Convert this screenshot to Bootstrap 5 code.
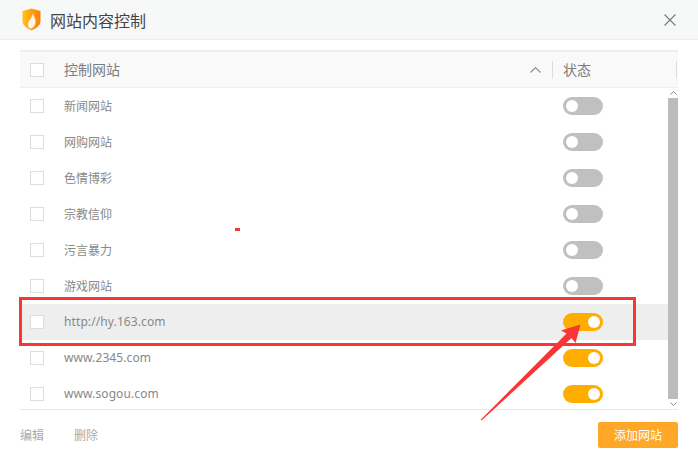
<!DOCTYPE html>
<html lang="zh">
<head>
<meta charset="utf-8">
<title>网站内容控制</title>
<link href="https://cdn.jsdelivr.net/npm/bootstrap@5.3.0/dist/css/bootstrap.min.css" rel="stylesheet">
<style>
html,body{width:698px;height:460px;overflow:hidden;background:#fff;}
body{font-family:"Noto Sans CJK SC","Noto Sans",sans-serif;color:#777;position:relative;}
.dlg-head{height:40px;background:#f7f9f9;border-bottom:1px solid #eee;padding:0 22px 0 22px;}
.dlg-title{font-size:16px;color:#444;margin-left:9px;line-height:20px;}
.dlg-body{margin:10px 20px 0;width:658px;}
.t-head{height:38px;background:#f9f9f9;border-top:2px solid #eee;border-bottom:1px solid #eee;font-size:14px;color:#7c7c7c;}
.t-rows{height:322px;border-bottom:1px solid #e8e8e8;overflow:hidden;}
.t-list{height:324px;overflow:hidden;flex:1 1 auto;min-width:0;}
.t-row{height:36px;font-size:12px;color:#888;flex:none;}
.t-row.is-hover{background:#eee;}
.latin{font-family:"Noto Sans","Noto Sans CJK SC",sans-serif;font-size:12px;letter-spacing:.1px;}
.box{width:14px;height:14px;border:1px solid #ddd;background:#fff;margin-left:10px;flex:none;}
.c-name{margin-left:20px;width:499px;flex:none;}
.c-sort{width:488px;margin-left:20px;flex:none;}
.sort-ico{margin-right:11px;}
.divider{width:1px;height:18px;background:#ddd;flex:none;}
.c-state{margin-left:10px;width:113px;flex:none;}
.tg{width:40px;height:18px;border-radius:9px;background:#c0c0c0;padding:3px;display:flex;flex:none;}
.tg i{width:12px;height:12px;border-radius:50%;background:#fff;display:block;}
.tg.on{background:#ffae00;justify-content:flex-end;}
.sbar{width:10px;flex:none;}
.sbar-arrow{height:10px;}
.sbar-thumb{flex:1;background:#bcbcbc;}
.dlg-foot{height:50px;margin:0 20px;width:658px;font-size:12px;color:#aaa;}
.dlg-foot span+span{margin-left:30px;}
.add-btn{width:80px;height:26px;padding:0;background:#ffa726;border:0;border-radius:2px;color:#fff;font-size:12px;}
.red-frame{position:absolute;left:19px;top:297px;width:617px;height:49px;border:3px solid #f83636;}
.red-dot{position:absolute;left:235px;top:228px;width:5px;height:3px;background:#f83636;}
.red-arrow{position:absolute;left:475px;top:320px;}
</style>
</head>
<body>
<div class="dlg-head d-flex align-items-center">
  <svg width="19" height="23" viewBox="0 0 19 23" aria-label="logo">
    <defs><linearGradient id="sg" x1="0" y1="0" x2="1" y2="0"><stop offset="0" stop-color="#ffc21a"/><stop offset="1" stop-color="#ff7d0a"/></linearGradient></defs>
    <path d="M.5 3 L9.500 .5 L18.500 3 V13 C18.500 18 13 21 9.500 22.500 C6 21 .5 18 .5 13Z" fill="url(#sg)"/>
    <path d="M11 5 C11.500 9 14 10.500 13.500 14.500 C13 18 10.500 20.500 8.500 20.500 C6 20 5.500 16.500 6.500 14 C7.500 11.500 8.500 12 9 10 C9.800 8.500 10.600 7 11 5Z" fill="#fff" opacity=".88"/>
  </svg>
  <span class="dlg-title">网站内容控制</span>
  <svg class="ms-auto" width="12" height="12" viewBox="0 0 12 12"><path d="M.5.500 11.500 11.500M11.500.500 .5 11.500" stroke="#777" stroke-width="1.100" fill="none"/></svg>
</div>
<div class="dlg-body">
  <div class="t-head d-flex align-items-center">
    <span class="box"></span>
    <div class="c-sort d-flex align-items-center justify-content-between">
      <span>控制网站</span>
      <svg width="11" height="6" viewBox="0 0 11 6" class="sort-ico"><path d="M.5 5.500 5.500.7 10.500 5.500" stroke="#888" stroke-width="1.100" fill="none"/></svg>
    </div>
    <span class="divider"></span>
    <span class="c-state">状态</span>
    <span class="divider"></span>
  </div>
  <div class="t-rows d-flex">
    <div class="t-list d-flex flex-column">
      <div class="t-row d-flex align-items-center"><span class="box"></span><span class="c-name">新闻网站</span><span class="tg"><i></i></span></div>
      <div class="t-row d-flex align-items-center"><span class="box"></span><span class="c-name">网购网站</span><span class="tg"><i></i></span></div>
      <div class="t-row d-flex align-items-center"><span class="box"></span><span class="c-name">色情博彩</span><span class="tg"><i></i></span></div>
      <div class="t-row d-flex align-items-center"><span class="box"></span><span class="c-name">宗教信仰</span><span class="tg"><i></i></span></div>
      <div class="t-row d-flex align-items-center"><span class="box"></span><span class="c-name">污言暴力</span><span class="tg"><i></i></span></div>
      <div class="t-row d-flex align-items-center"><span class="box"></span><span class="c-name">游戏网站</span><span class="tg"><i></i></span></div>
      <div class="t-row is-hover d-flex align-items-center"><span class="box"></span><span class="c-name latin">http://hy.163.com</span><span class="tg on"><i></i></span></div>
      <div class="t-row d-flex align-items-center"><span class="box"></span><span class="c-name latin">www.2345.com</span><span class="tg on"><i></i></span></div>
      <div class="t-row d-flex align-items-center"><span class="box"></span><span class="c-name latin">www.sogou.com</span><span class="tg on"><i></i></span></div>
    </div>
    <div class="sbar d-flex flex-column">
      <div class="sbar-arrow d-flex align-items-center justify-content-center"><svg width="7" height="4" viewBox="0 0 7 4"><path d="M.5 3.500 3.500.5 6.500 3.500" stroke="#888" fill="none"/></svg></div>
      <div class="sbar-thumb"></div>
      <div class="sbar-arrow d-flex align-items-center justify-content-center"><svg width="7" height="4" viewBox="0 0 7 4"><path d="M.5.500 3.500 3.500 6.500.5" stroke="#888" fill="none"/></svg></div>
    </div>
  </div>
</div>
<div class="dlg-foot d-flex align-items-center">
  <span>编辑</span><span>删除</span>
  <button type="button" class="btn add-btn ms-auto">添加网站</button>
</div>
<div class="red-frame"></div>
<div class="red-dot"></div>
<svg class="red-arrow" width="110" height="105" viewBox="475 320 110 105"><path d="M580.500 324.500 L575.500 343 L571.500 338 L481.500 420.500 L480.500 420 L566.500 333.500 L561 330.500Z" fill="#f83636"/></svg>
<script src="https://cdn.jsdelivr.net/npm/bootstrap@5.3.0/dist/js/bootstrap.bundle.min.js"></script>
</body>
</html>
